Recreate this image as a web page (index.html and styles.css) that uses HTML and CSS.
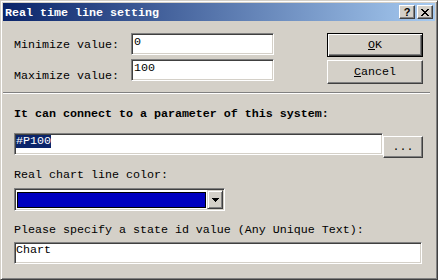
FILE: index.html
```html
<!DOCTYPE html>
<html>
<head>
<meta charset="utf-8">
<link rel="stylesheet" href="styles.css">
</head>
<body>
<div class="window">
  <div class="titlebar">
    <span class="title">Real time line setting</span>
    <div class="tb-buttons">
      <div class="tb-btn help">?</div>
      <div class="tb-btn close">
        <svg width="8" height="7" viewBox="0 0 8 7" shape-rendering="crispEdges"><path d="M0 0h2v1h-2zM6 0h2v1h-2zM1 1h2v1h-2zM5 1h2v1h-2zM2 2h4v1h-4zM3 3h2v1h-2zM2 4h4v1h-4zM1 5h2v1h-2zM5 5h2v1h-2zM0 6h2v1h-2zM6 6h2v1h-2z" fill="#000"/></svg>
      </div>
    </div>
  </div>
  <div class="content">
    <div class="top">
      <div class="fields">
        <div class="row">
          <span class="lbl">Minimize value:</span>
          <div class="field f-short">0</div>
        </div>
        <div class="row">
          <span class="lbl lbl-max">Maximize value:</span>
          <div class="field f-short">100</div>
        </div>
      </div>
      <div class="actions">
        <div class="btn btn-default"><u>O</u>K</div>
        <div class="btn"><u>C</u>ancel</div>
      </div>
    </div>
    <div class="sep"></div>
    <div class="heading">It can connect to a parameter of this system:</div>
    <div class="param-row">
      <div class="field f-param"><span class="sel">#P100</span></div>
      <div class="btn btn-browse">...</div>
    </div>
    <div class="text-line l-color">Real chart line color:</div>
    <div class="combo">
      <div class="swatch-area"><div class="swatch"></div></div>
      <div class="drop">
        <svg width="7" height="4" viewBox="0 0 7 4" shape-rendering="crispEdges"><path d="M0 0h7v1h-7zM1 1h5v1h-5zM2 2h3v1h-3zM3 3h1v1h-1z" fill="#000"/></svg>
      </div>
    </div>
    <div class="text-line l-state">Please specify a state id value (Any Unique Text):</div>
    <div class="field f-state">Chart</div>
  </div>
</div>
</body>
</html>
```

FILE: styles.css
```css
* { box-sizing: border-box; }
html, body { margin: 0; padding: 0; }
body {
  background: #d4d0c8;
  font-family: "Liberation Mono", "DejaVu Sans Mono", monospace;
  font-size: 11.66px;
  color: #000;
}
.window {
  width: 438px;
  height: 280px;
  border: 1px solid;
  border-color: #d4d0c8 #404040 #404040 #d4d0c8;
  box-shadow: inset 1px 1px #fff, inset -1px -1px #808080;
  padding: 2px;
  background: #d4d0c8;
  display: flex;
  flex-direction: column;
}
.titlebar {
  height: 18px;
  flex: none;
  background: linear-gradient(to right, #0a246a, #a6caf0);
  display: flex;
  align-items: center;
  justify-content: space-between;
  padding: 0 2px;
}
.title {
  color: #fff;
  font-weight: bold;
  line-height: 14px;
  margin-top: 1px;
}
.tb-buttons { display: flex; gap: 2px; }
.tb-btn {
  width: 16px;
  height: 14px;
  background: #d4d0c8;
  border: 1px solid;
  border-color: #fff #404040 #404040 #fff;
  box-shadow: inset -1px -1px #808080;
  display: flex;
  align-items: center;
  justify-content: center;
}
.help {
  font-family: "Liberation Sans", Arial, sans-serif;
  font-weight: bold;
  font-size: 11px;
  line-height: 11px;
}
.content {
  padding: 12px 0 0 11px;
  display: flex;
  flex-direction: column;
  align-items: flex-start;
}
.top { display: flex; align-items: flex-start; }
.fields { display: flex; flex-direction: column; gap: 4px; }
.row { display: flex; align-items: flex-start; height: 22px; }
.lbl { width: 117px; line-height: 14px; padding-top: 5px; flex: none; }
.lbl-max { padding-top: 10px; }
.field {
  background: #fff;
  border: 1px solid;
  border-color: #808080 #fff #fff #808080;
  box-shadow: inset 1px 1px #404040, inset -1px -1px #d4d0c8;
  line-height: 13px;
  height: 22px;
  white-space: nowrap;
}
.f-short { width: 143px; padding: 2px 2px 0; }
.actions {
  margin-left: 53px;
  display: flex;
  flex-direction: column;
  gap: 3px;
}
.btn {
  width: 96px;
  height: 24px;
  background: #d4d0c8;
  border: 1px solid;
  border-color: #fff #404040 #404040 #fff;
  box-shadow: inset -1px -1px #808080;
  display: flex;
  align-items: center;
  justify-content: center;
  line-height: 14px;
}
.btn-default {
  border-color: #000;
  box-shadow: inset 1px 1px #fff, inset -1px -1px #404040, inset -2px -2px #808080;
}
.sep {
  margin: 8px 0 0 -11px;
  width: 427px;
  height: 2px;
  border-top: 1px solid #808080;
  border-bottom: 1px solid #fff;
}
.heading {
  font-weight: bold;
  line-height: 14px;
  margin-top: 13px;
}
.param-row {
  display: flex;
  align-items: flex-start;
  margin-top: 12px;
}
.f-param { width: 369px; padding: 1px 1px 0; }
.sel {
  display: inline-block;
  background: #0a246a;
  color: #fff;
  line-height: 13px;
}
.btn-browse { width: 40px; height: 22px; margin-top: 3px; }
.text-line { line-height: 14px; }
.l-color { margin-top: 10px; }
.combo {
  margin-top: 6px;
  width: 211px;
  height: 23px;
  background: #fff;
  border: 1px solid;
  border-color: #808080 #fff #fff #808080;
  box-shadow: inset 1px 1px #404040, inset -1px -1px #d4d0c8;
  padding: 1px;
  display: flex;
}
.swatch-area { flex: 1; padding: 2px 1px 1px 1px; }
.swatch {
  height: 100%;
  background: #0000c0;
  border: 1px solid #000;
}
.drop {
  width: 16px;
  height: 19px;
  flex: none;
  background: #d4d0c8;
  border: 1px solid;
  border-color: #d4d0c8 #404040 #404040 #d4d0c8;
  box-shadow: inset 1px 1px #fff, inset -1px -1px #808080;
  display: flex;
  align-items: center;
  justify-content: center;
}
.l-state { margin-top: 12px; }
.f-state { margin-top: 5px; width: 408px; padding: 1px 1px 0; }
```
